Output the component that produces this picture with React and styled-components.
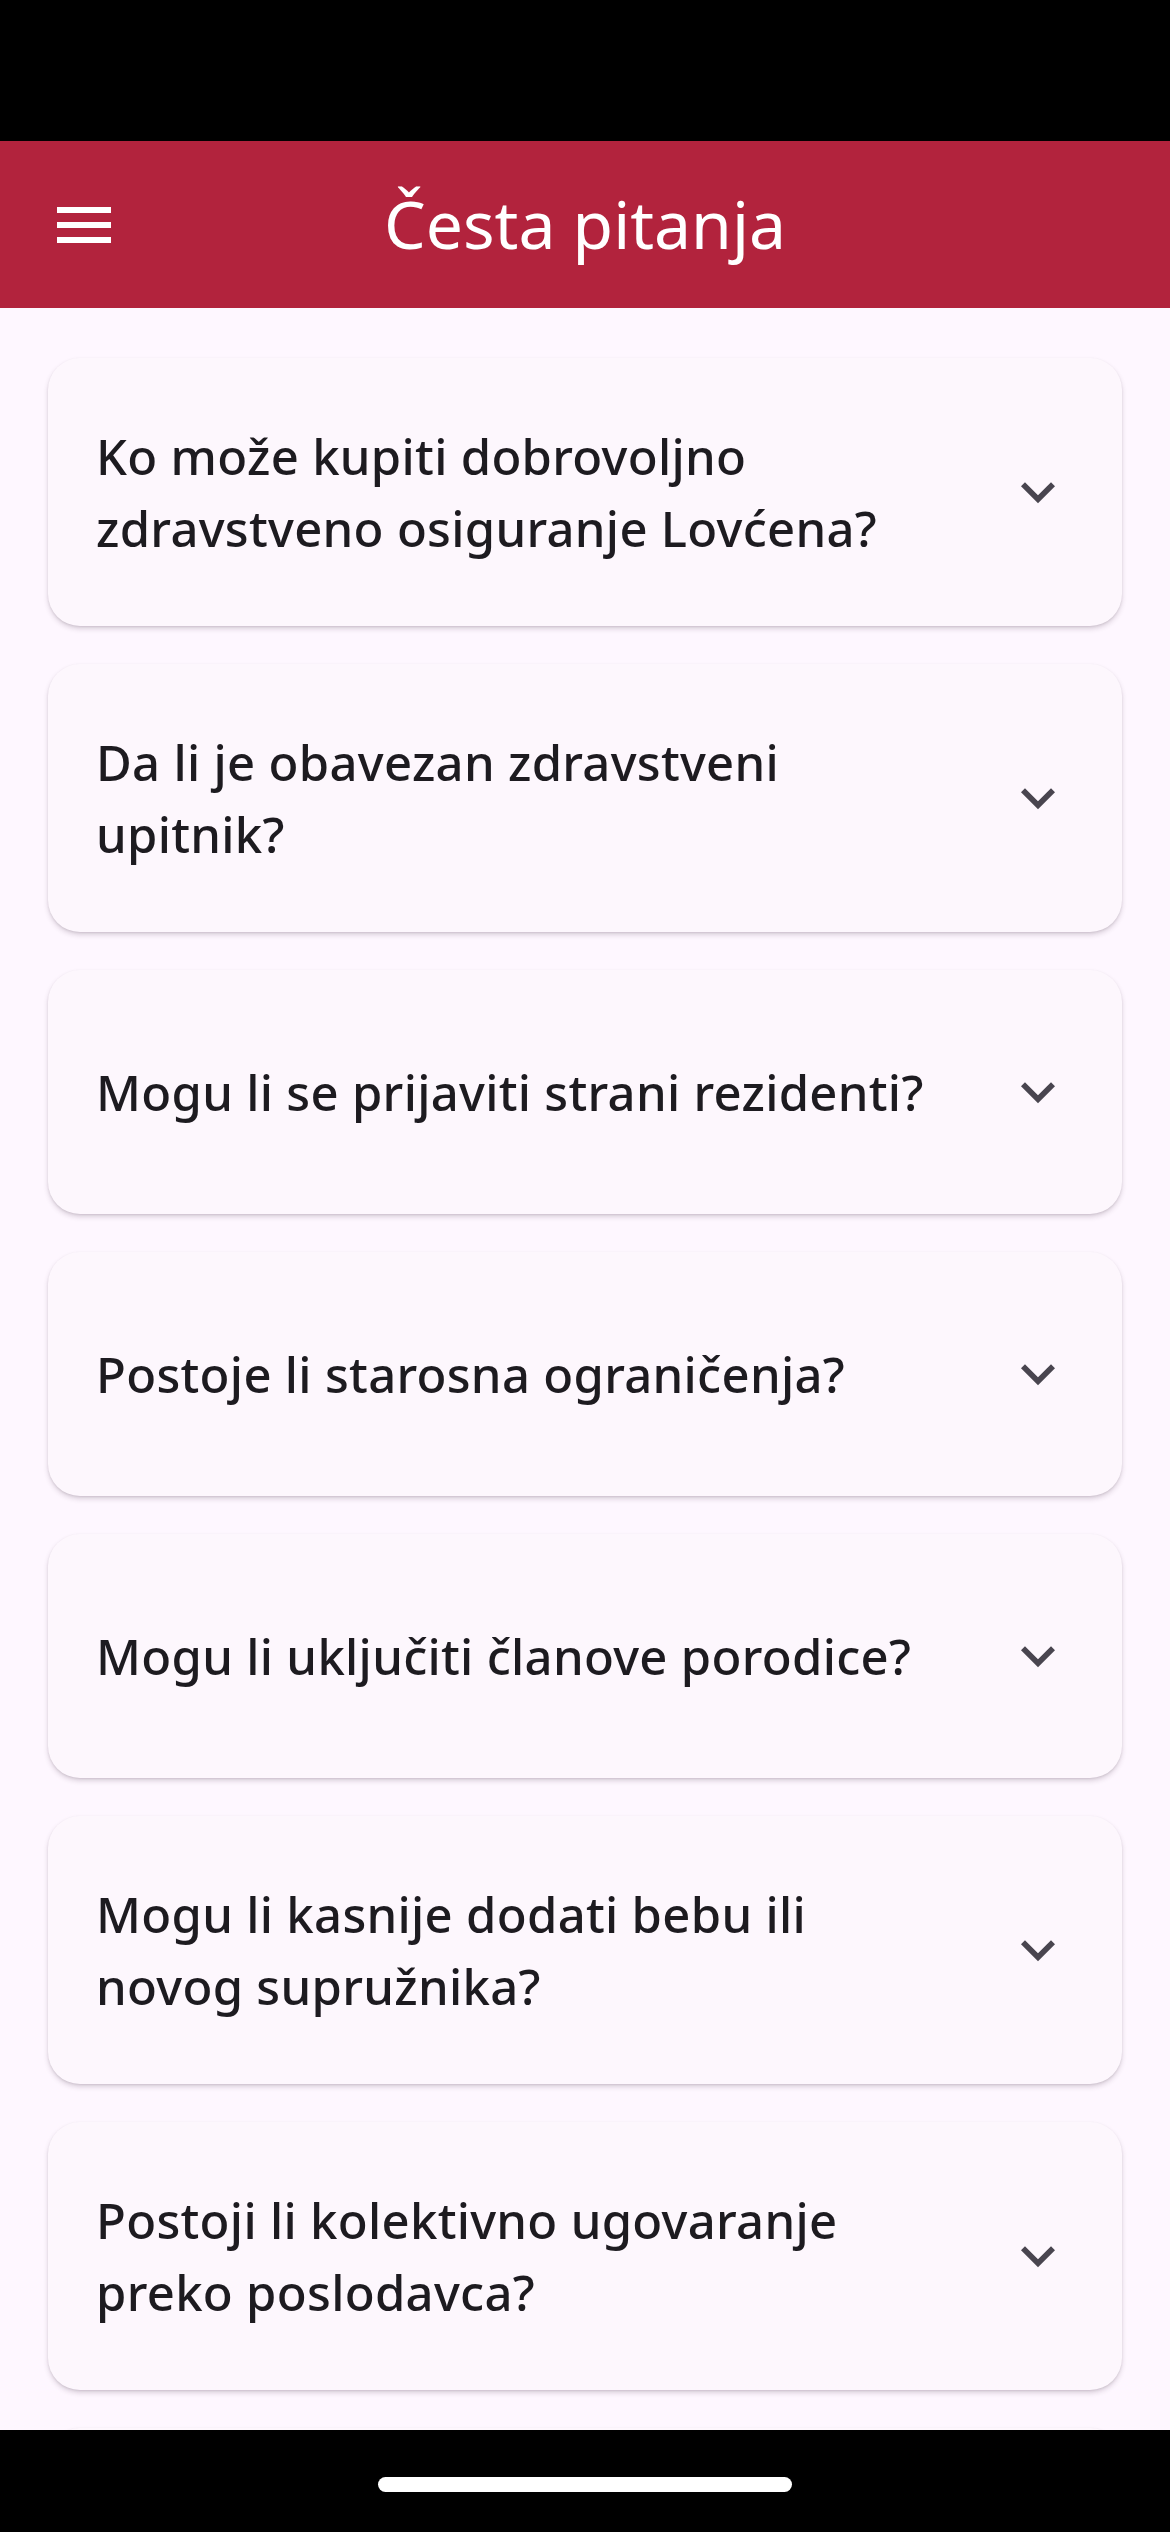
import styled, { createGlobalStyle } from "styled-components";

const GlobalStyle = createGlobalStyle`
  html, body {
    margin: 0;
    padding: 0;
    background: #000;
  }
  * {
    box-sizing: border-box;
  }
`;

const faqs = [
  "Ko može kupiti dobrovoljno zdravstveno osiguranje Lovćena?",
  "Da li je obavezan zdravstveni upitnik?",
  "Mogu li se prijaviti strani rezidenti?",
  "Postoje li starosna ograničenja?",
  "Mogu li uključiti članove porodice?",
  "Mogu li kasnije dodati bebu ili novog supružnika?",
  "Postoji li kolektivno ugovaranje preko poslodavca?",
  "Kako se prijavljuje šteta?",
];

const Screen = styled.div`
  width: 1170px;
  height: 2532px;
  display: flex;
  flex-direction: column;
  overflow: hidden;
  background: #fef7ff;
  font-family: "Noto Sans", "Open Sans", sans-serif;
`;

const StatusBar = styled.div`
  height: 141px;
  flex-shrink: 0;
  background: #000;
`;

const Header = styled.header`
  height: 167px;
  flex-shrink: 0;
  background: #b2233d;
  display: flex;
  align-items: center;
  justify-content: center;
  position: relative;
`;

const MenuButton = styled.button`
  position: absolute;
  left: 48px;
  top: 48px;
  width: 72px;
  height: 72px;
  padding: 0;
  border: none;
  background: none;
  display: flex;
  cursor: pointer;
`;

const Title = styled.h1`
  margin: 0;
  color: #fff;
  font-size: 66px;
  font-weight: 400;
  line-height: 1;
  padding-bottom: 4px;
`;

const List = styled.main`
  flex: 1;
  overflow: hidden;
  padding: 50px 48px 0;
  display: flex;
  flex-direction: column;
  gap: 38px;
`;

const Card = styled.div`
  flex-shrink: 0;
  min-height: 244px;
  padding: 62px 50px 62px 48px;
  display: flex;
  align-items: center;
  gap: 60px;
  background: #fdf7fd;
  border-radius: 32px;
  box-shadow: 0 3px 5px rgba(60, 40, 60, 0.18), 0 1px 2px rgba(60, 40, 60, 0.1);
`;

const Question = styled.span`
  flex: 1;
  color: #1d1b20;
  font-size: 49px;
  font-weight: 500;
  letter-spacing: 0.3px;
  line-height: 72px;
`;

const Chevron = styled.svg`
  width: 68px;
  height: 68px;
  flex-shrink: 0;
  fill: #49454f;
`;

const NavBar = styled.div`
  height: 102px;
  flex-shrink: 0;
  background: #000;
  display: flex;
  align-items: center;
  justify-content: center;
`;

const HomeIndicator = styled.div`
  width: 414px;
  height: 15px;
  border-radius: 8px;
  background: #fff;
  margin-top: 6px;
`;

const MenuIcon = () => (
  <svg width="72" height="72" viewBox="0 0 24 24" fill="#fff">
    <path d="M3 18h18v-2H3v2zm0-5h18v-2H3v2zm0-7v2h18V6H3z" />
  </svg>
);

const App = () => {
  return (
    <>
      <GlobalStyle />
      <Screen>
        <StatusBar />
        <Header>
          <MenuButton aria-label="menu">
            <MenuIcon />
          </MenuButton>
          <Title>Česta pitanja</Title>
        </Header>
        <List>
          {faqs.map((q) => (
            <Card key={q}>
              <Question>{q}</Question>
              <Chevron viewBox="0 0 24 24">
                <path d="M16.59 8.59L12 13.17 7.41 8.59 6 10l6 6 6-6z" />
              </Chevron>
            </Card>
          ))}
        </List>
        <NavBar>
          <HomeIndicator />
        </NavBar>
      </Screen>
    </>
  );
};

export default App;
